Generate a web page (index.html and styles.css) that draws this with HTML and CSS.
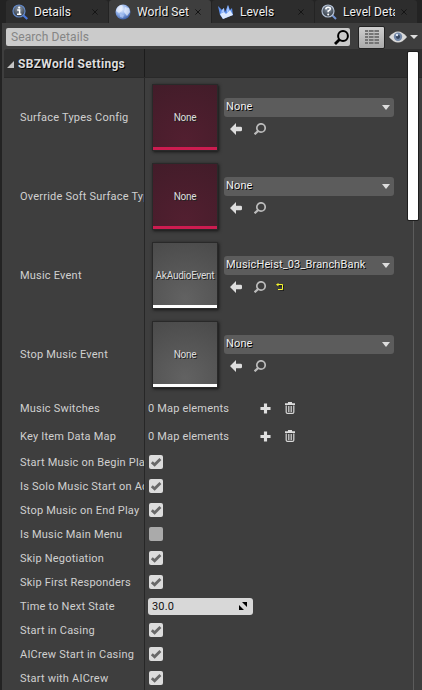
FILE: index.html
```html
<!DOCTYPE html>
<html lang="en">
<head>
<meta charset="utf-8">
<title>World Settings</title>
<link rel="stylesheet" href="styles.css">
</head>
<body>
<svg class="defs" aria-hidden="true">
  <defs>
    <radialGradient id="globe" cx=".4" cy=".3" r=".75"><stop offset="0" stop-color="#eaf1ff"/><stop offset=".5" stop-color="#92b2ec"/><stop offset="1" stop-color="#34569f"/></radialGradient>
    <radialGradient id="glass" cx=".5" cy=".3" r=".7"><stop offset="0" stop-color="#8a98aa"/><stop offset="1" stop-color="#30373f"/></radialGradient>
    <symbol id="back" viewBox="0 0 12 12"><path d="M0 6L6 0V3.7H10.5Q12 3.7 12 5V7Q12 8.3 10.5 8.3H6V12Z" fill="#ddd"/></symbol>
    <symbol id="find" viewBox="0 0 12 12"><circle cx="7" cy="5" r="4.2" fill="none" stroke="#bcbcbc" stroke-width="1.7"/><path d="M4.2 8L.6 11.3" stroke="#bcbcbc" stroke-width="2.2"/></symbol>
    <symbol id="plus" viewBox="0 0 12 12"><path d="M6 .5V11.5M.5 6H11.5" stroke="#e0e0e0" stroke-width="3.4"/></symbol>
    <symbol id="trash" viewBox="0 0 10 12"><path d="M0 1.2H3V0H7V1.2H10V3H0Z" fill="#ddd"/><path d="M1.2 3.5V10.2Q1.2 11.3 2.5 11.3H7.5Q8.8 11.3 8.8 10.2V3.5M3.8 4V10M6.2 4V10" fill="none" stroke="#d8d8d8" stroke-width="1.2"/></symbol>
    <symbol id="check" viewBox="0 0 14 14"><path d="M2.8 7.3L5.6 9.8L11.4 4.1" fill="none" stroke="#686868" stroke-width="2.8"/></symbol>
  </defs>
</svg>
<div class="window">
  <nav class="tabs">
    <div class="tab">
      <svg class="tab-icon" viewBox="0 0 16 16"><path d="M11 11L15.3 15" stroke="#4a78dc" stroke-width="2.2"/><circle cx="7" cy="7" r="6" fill="url(#glass)" stroke="#6288c8" stroke-width="1.2"/><path d="M5.2 6H7.6V10M5 10.3H9.4" stroke="#fff" stroke-width="1.5" fill="none"/><circle cx="7.2" cy="3.6" r="1.1" fill="#fff"/></svg>
      <span class="tab-name">Details</span><svg class="close" viewBox="0 0 6 6"><path d="M.4 .4L5.6 5.6M5.6 .4L.4 5.6"/></svg>
    </div>
    <div class="tab active">
      <svg class="tab-icon" viewBox="0 0 16 16"><circle cx="8" cy="8" r="7.5" fill="url(#globe)"/><path d="M2 4Q4 1 7 1L8 3L6 5L7 7L4 9L1 7ZM10 3L14 4L15 8L12 12L9 8Z" fill="#f0f5ff" opacity=".65"/><path d="M5 10L9 11L8 14L5 13Z" fill="#bcd0f8" opacity=".6"/></svg>
      <span class="tab-name">World Set</span><svg class="close" viewBox="0 0 6 6"><path d="M.4 .4L5.6 5.6M5.6 .4L.4 5.6"/></svg>
    </div>
    <div class="tab">
      <svg class="tab-icon" viewBox="0 0 16 16"><path d="M0 2L4 6L6 4L7 8L10 1L12 6L14 4L15 11L5 15L2 11Z" fill="#5b8eea"/><path d="M2 10L6 8L8 10L12 6L15 11L5 15Z" fill="#dce9ff"/><path d="M4 6L6 4L6 8L3 9ZM9 6L10 1L11 6L9 9Z" fill="#a9c8ff"/></svg>
      <span class="tab-name">Levels</span><svg class="close" viewBox="0 0 6 6"><path d="M.4 .4L5.6 5.6M5.6 .4L.4 5.6"/></svg>
    </div>
    <div class="tab">
      <svg class="tab-icon" viewBox="0 0 16 16"><path d="M11 11L15 15" stroke="#7395d4" stroke-width="2"/><circle cx="7" cy="7" r="6" fill="url(#glass)" stroke="#b4c1d5" stroke-width="1.2"/><path d="M4.8 5.4Q5 3.3 7.1 3.3Q9.4 3.3 9.3 5Q9.2 6.2 7.2 7V8.3" stroke="#fff" stroke-width="1.6" fill="none"/><circle cx="7.2" cy="10.4" r="1" fill="#fff"/></svg>
      <span class="tab-name">Level Details</span><svg class="close" viewBox="0 0 6 6"><path d="M.4 .4L5.6 5.6M5.6 .4L.4 5.6"/></svg>
    </div>
  </nav>
  <main class="panel">
    <div class="toolbar">
      <div class="search"><span>Search Details</span><svg width="15" height="15" viewBox="0 0 15 15"><circle cx="9" cy="6" r="4.9" fill="none" stroke="#000" stroke-width="2"/><path d="M5.5 9.5L1 14" stroke="#000" stroke-width="2.8"/></svg></div>
      <div class="grid-button"><svg width="14" height="14" viewBox="0 0 14 14"><path d="M0 1H14M0 4H14M0 7H14M0 10H14M0 13H14" stroke="#747474" stroke-width="2"/><path d="M3.5 0V14M9 0V14" stroke="#b5b5b5" stroke-width="1"/></svg></div>
      <svg class="eye" width="18" height="12" viewBox="0 0 18 12"><path d="M0 6Q9-5 18 6Q9 17 0 6Z" fill="#d9d9d9"/><circle cx="9" cy="5.8" r="4.2" fill="#7186a6"/><circle cx="9" cy="5.8" r="2.1" fill="#34445e"/><circle cx="8" cy="4" r="1.2" fill="#dce6f5"/></svg>
      <span class="caret"></span>
    </div>
    <section class="properties">
      <header class="category"><div class="category-name"><svg width="7" height="7" viewBox="0 0 7 7"><path d="M7 0V7H0Z" fill="#c4c4c4"/></svg><span>SBZWorld Settings</span></div></header>

      <div class="row asset"><div class="label">Surface Types Config</div><div class="value"><div class="thumb red"><span>None</span></div><div class="picker"><div class="select"><span>None</span><i class="caret"></i></div><div class="actions"><svg><use href="#back"/></svg><svg><use href="#find"/></svg></div></div></div></div>
      <div class="row asset"><div class="label">Override Soft Surface Types</div><div class="value"><div class="thumb red"><span>None</span></div><div class="picker"><div class="select"><span>None</span><i class="caret"></i></div><div class="actions"><svg><use href="#back"/></svg><svg><use href="#find"/></svg></div></div></div></div>
      <div class="row asset"><div class="label">Music Event</div><div class="value"><div class="thumb"><span>AkAudioEvent</span></div><div class="picker"><div class="select"><span>MusicHeist_03_BranchBank</span><i class="caret"></i></div><div class="actions"><svg><use href="#back"/></svg><svg><use href="#find"/></svg><svg class="reset" viewBox="0 0 8 8"><path d="M3 7.5H7.5V2.5H1.5" fill="none" stroke="#111" transform="translate(.5 .5)"/><path d="M2 6.5H6.5V1.5H1" fill="none" stroke="#f5f52c"/><path d="M0 1.5L2.5 0V3.5Z" fill="#f5f52c"/></svg></div></div></div></div>
      <div class="row asset"><div class="label">Stop Music Event</div><div class="value"><div class="thumb"><span>None</span></div><div class="picker"><div class="select"><span>None</span><i class="caret"></i></div><div class="actions"><svg><use href="#back"/></svg><svg><use href="#find"/></svg></div></div></div></div>

      <div class="row map"><div class="label">Music Switches</div><div class="value"><span class="count">0 Map elements</span><svg class="plus"><use href="#plus"/></svg><svg class="trash"><use href="#trash"/></svg></div></div>
      <div class="row map"><div class="label">Key Item Data Map</div><div class="value"><span class="count">0 Map elements</span><svg class="plus"><use href="#plus"/></svg><svg class="trash"><use href="#trash"/></svg></div></div>

      <div class="row"><div class="label">Start Music on Begin Play</div><div class="value"><svg class="box"><use href="#check"/></svg></div></div>
      <div class="row"><div class="label">Is Solo Music Start on Action</div><div class="value"><svg class="box"><use href="#check"/></svg></div></div>
      <div class="row"><div class="label">Stop Music on End Play</div><div class="value"><svg class="box"><use href="#check"/></svg></div></div>
      <div class="row"><div class="label">Is Music Main Menu</div><div class="value"><svg class="box off"></svg></div></div>
      <div class="row"><div class="label">Skip Negotiation</div><div class="value"><svg class="box"><use href="#check"/></svg></div></div>
      <div class="row"><div class="label">Skip First Responders</div><div class="value"><svg class="box"><use href="#check"/></svg></div></div>
      <div class="row"><div class="label">Time to Next State</div><div class="value"><div class="number"><span>30.0</span><svg width="8" height="8" viewBox="0 0 8 8"><path d="M3 0H8V5ZM0 3V8H5Z"/></svg></div></div></div>
      <div class="row"><div class="label">Start in Casing</div><div class="value"><svg class="box"><use href="#check"/></svg></div></div>
      <div class="row"><div class="label">AICrew Start in Casing</div><div class="value"><svg class="box"><use href="#check"/></svg></div></div>
      <div class="row"><div class="label">Start with AICrew</div><div class="value"><svg class="box"><use href="#check"/></svg></div></div>
      <div class="scrollbar"><div class="scroll-handle"></div></div>
    </section>
  </main>
</div>
</body>
</html>
```
FILE: styles.css
```css
* { box-sizing: border-box; }
body { margin: 0; background: #232323; font-family: Roboto, sans-serif; font-size: 11px; color: #d0d0d0; overflow: hidden; }
svg { display: block; flex: none; }
.defs { position: absolute; width: 0; height: 0; }
.window { width: 422px; height: 690px; overflow: hidden; }
.tabs { display: flex; gap: 1px; height: 23px; padding-left: 6px; }
.tab { display: flex; align-items: center; width: 102px; padding: 1px 10px 0 6px; background: #2d2d2d; border-radius: 3px 3px 0 0; }
.tab.active { background: #3e3e3e; }
.tab-icon { width: 16px; height: 16px; }
.tab-name { flex: 1; margin-left: 6px; margin-right: 6px; overflow: hidden; white-space: nowrap; font-size: 12px; letter-spacing: .05px; line-height: 18px; color: #eee; text-shadow: 1px 1px 0 #000; }
.close { width: 6px; height: 6px; stroke: #151515; stroke-width: 1; }
.panel { height: 667px; margin-left: 2px; background: #3e3e3e; }
.toolbar { display: flex; align-items: center; height: 26px; padding: 2px 4px 0; }
.search { display: flex; align-items: center; justify-content: space-between; width: 344px; height: 18px; padding: 0 1px 0 5px; border-radius: 2px; background: #cbcbcb; color: #858585; font-size: 12px; letter-spacing: .1px; }
.grid-button { display: grid; place-items: center; width: 27px; height: 23px; margin-left: 8px; border: 1px solid #222; border-radius: 2px; background: linear-gradient(#cfcfcf, #aaa); }
.eye { margin-left: 4px; }
.caret { flex: none; width: 8px; height: 4px; background: #ddd; clip-path: polygon(0 0, 100% 0, 50% 100%); }
.eye + .caret { margin-left: 3px; }
.properties { position: relative; height: 641px; background: linear-gradient(90deg, transparent 142px, #272727 142px 143px, transparent 143px); }
.category { height: 29px; margin-left: 2px; background: linear-gradient(90deg, transparent 140px, #1c1c1c 140px 141px, transparent 141px) #2f2f2f; border-bottom: 1px solid #292929; border-radius: 3px 0 0 0; }
.category-name { display: flex; align-items: center; gap: 4px; height: 29px; padding: 1px 0 0 3px; font-size: 12px; font-weight: 700; letter-spacing: .32px; color: #ddd; text-shadow: 1px 1px 0 #000; }
.category-name svg { margin-top: 1px; }
.row { display: grid; grid-template-columns: 142px 1fr; height: 24px; }
.row.asset { height: 79px; }
.row.map { height: 28px; }
.label { align-self: center; padding-left: 18px; overflow: hidden; white-space: nowrap; line-height: 16px; letter-spacing: .21px; }
.row:not(.asset) .label { padding-top: 1px; line-height: 17px; }
.value { display: flex; align-items: center; padding-left: 4px; letter-spacing: .18px; }
.thumb { display: flex; align-items: center; justify-content: center; width: 64px; height: 65px; margin: 0 0 0 5px; padding-top: 3px; border-bottom: 3px solid #fff; background: radial-gradient(circle at 50% 90%, #626262, #4a4a4a); box-shadow: 0 0 0 1px #292929, 1px 1px 3px 1px #151515; font-size: 10px; letter-spacing: -.25px; color: #ddd; text-shadow: 1px 1px 0 #222; }
.thumb.red { border-color: #cc1c50; background: radial-gradient(circle at 50% 90%, #521f30, #421c29); }
.picker { align-self: flex-start; width: 170px; margin: 20px 0 0 7px; }
.select { display: flex; align-items: center; justify-content: space-between; height: 19px; padding: 0 4px 2px 2px; border-radius: 3px; background: #5c5c5c; color: #eee; text-shadow: 1px 1px 0 #000; letter-spacing: .13px; }
.select .caret { height: 5px; margin-top: 2px; }
.actions { display: flex; align-items: center; gap: 12px; padding: 6px 0 0 6px; }
.actions svg { width: 12px; height: 12px; }
.actions .reset { width: 8px; height: 8px; margin-left: -2px; }
.count { width: 107px; padding-left: 0; }
.plus { width: 11px; height: 11px; margin-left: 5px; }
.trash { width: 10px; height: 12px; margin-left: 14px; }
.box { width: 14px; height: 14px; margin-left: 1px; border-radius: 2px; background: #dcdcdc; }
.box.off { background: #aaa; }
.number { display: flex; align-items: center; justify-content: space-between; width: 105px; height: 17px; padding: 0 6px 0 4px; border-radius: 3px; background: #d8d8d8; color: #111; }
.scrollbar { position: absolute; top: 3px; right: 4px; bottom: 0; width: 10px; background: linear-gradient(90deg, transparent 5px, #5c5c5c 5px 6px, transparent 6px); }
.scroll-handle { height: 168px; border-radius: 1px; background: #fff; box-shadow: 0 0 0 1px #1d1d1d; }
```
